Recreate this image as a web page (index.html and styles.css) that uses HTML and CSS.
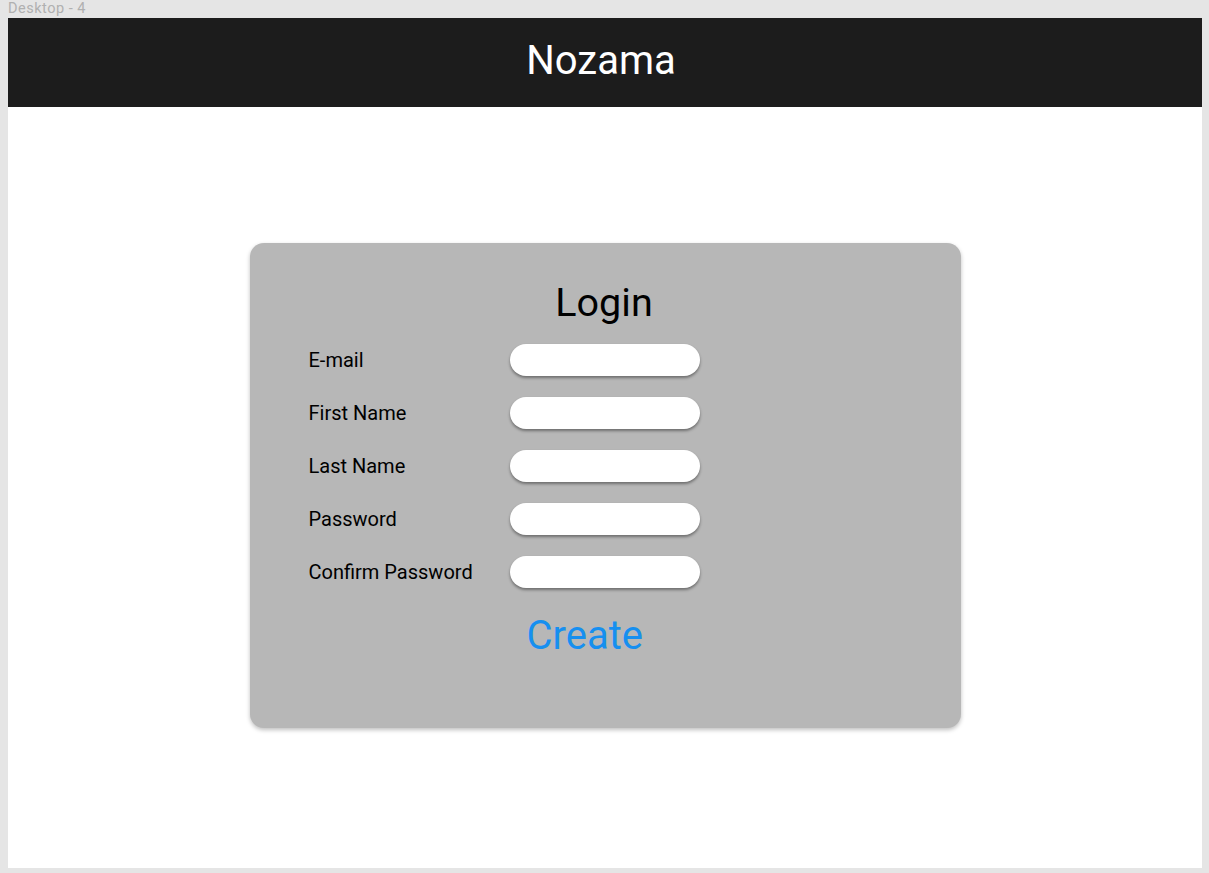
FILE: index.html
```html
<!DOCTYPE html>
<html>
<head>
<meta charset="utf-8">
<title>Desktop - 4</title>
<link rel="stylesheet" href="styles.css">
</head>
<body>
<div class="frame-label">Desktop - 4</div>
<main class="artboard">
  <header class="topbar">Nozama</header>
  <section class="card">
    <h1 class="card-title">Login</h1>
    <form class="fields">
      <label class="field-label" for="email">E-mail</label>
      <input class="field-input" id="email" type="text">
      <label class="field-label" for="first">First Name</label>
      <input class="field-input" id="first" type="text">
      <label class="field-label" for="last">Last Name</label>
      <input class="field-input" id="last" type="text">
      <label class="field-label" for="pw">Password</label>
      <input class="field-input" id="pw" type="password">
      <label class="field-label" for="pw2">Confirm Password</label>
      <input class="field-input" id="pw2" type="password">
    </form>
    <div class="create">Create</div>
  </section>
</main>
</body>
</html>
```
FILE: styles.css
```css
html, body {
  margin: 0;
  padding: 0;
}
body {
  background: #e5e5e5;
  font-family: Roboto, "Liberation Sans", sans-serif;
  width: 1209px;
  height: 873px;
  overflow: hidden;
}
.frame-label {
  height: 18px;
  padding-left: 8px;
  font-size: 14.5px;
  line-height: 18px;
  color: #b0b0b0;
  letter-spacing: 0.5px;
}
.artboard {
  margin-left: 8px;
  width: 1194px;
  height: 850px;
  background: #ffffff;
  display: flex;
  flex-direction: column;
}
.topbar {
  height: 89px;
  background: #1c1c1c;
  color: #ffffff;
  font-size: 40px;
  line-height: 86px;
  text-align: center;
  padding-right: 8px;
}
.card {
  margin: 136px auto 0;
  width: 711px;
  height: 485px;
  box-sizing: border-box;
  background: #b7b7b7;
  border-radius: 14px;
  box-shadow: 0 2px 4px rgba(0, 0, 0, 0.25);
  padding: 39px 0 0 59px;
}
.card-title {
  margin: 0 0 20px -59px;
  font-weight: 400;
  font-size: 39.5px;
  line-height: 42px;
  text-align: center;
  color: #000;
  padding-right: 2px;
}
.fields {
  display: grid;
  grid-template-columns: 201px 190px;
  grid-auto-rows: 32px;
  row-gap: 21px;
  align-items: center;
}
.field-label {
  font-size: 20px;
  color: #000;
  line-height: 24px;
}
.field-input {
  height: 32px;
  width: 190px;
  box-sizing: border-box;
  border: none;
  border-radius: 16px;
  background: #ffffff;
  box-shadow: 0 2px 3px rgba(0, 0, 0, 0.4);
  outline: none;
  margin: 0;
  padding: 0 12px;
}
.create {
  margin: 24px 0 0 218px;
  font-size: 40px;
  line-height: 47px;
  color: #168ff0;
}
```
